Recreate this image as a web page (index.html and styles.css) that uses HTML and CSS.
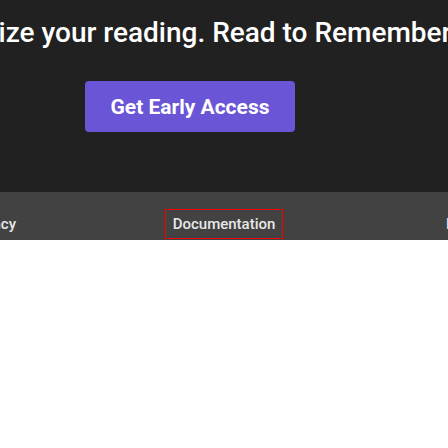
FILE: index.html
```html
<!DOCTYPE html>
<html>
<head>
<meta charset="utf-8">
<link rel="stylesheet" href="styles.css">
</head>
<body>
<section class="hero">
  <div class="hero-inner">
    <div class="headline-wrap">
      <h1 class="headline">Optimize your reading. Read to Remember.</h1>
    </div>
    <a class="cta" href="#">Get Early Access</a>
  </div>
</section>
<nav class="tabs">
  <div class="tabs-side tabs-left">
    <a class="tab" href="#">Privacy</a>
  </div>
  <a class="tab tab-active" href="#">Documentation</a>
  <div class="tabs-side tabs-right">
    <a class="tab" href="#">FAQ</a>
  </div>
</nav>
<main class="content"></main>
</body>
</html>
```
FILE: styles.css
```css
html, body {
  margin: 0;
  padding: 0;
  background: #ffffff;
  font-family: Roboto, "Noto Sans", sans-serif;
  overflow: hidden;
}
.hero {
  background: #212121;
  height: 192px;
  box-sizing: border-box;
  padding-top: 15px;
}
.hero-inner {
  width: 380px;
  display: flex;
  flex-direction: column;
  align-items: center;
}
.headline-wrap {
  width: 100%;
  display: flex;
  justify-content: center;
}
.headline {
  margin: 0;
  flex: none;
  white-space: nowrap;
  color: #ffffff;
  font-size: 28px;
  line-height: 36px;
  font-weight: 500;
}
.cta {
  margin-top: 30px;
  width: 210px;
  height: 51px;
  box-sizing: border-box;
  display: flex;
  align-items: center;
  justify-content: center;
  background: #6a55d6;
  color: #ffffff;
  border-radius: 4px;
  text-decoration: none;
  font-size: 21px;
  font-weight: 700;
}
.tabs {
  background: #424242;
  height: 48px;
  display: grid;
  grid-template-columns: minmax(0, 1fr) auto minmax(0, 1fr);
  align-items: start;
  padding-top: 17px;
  box-sizing: border-box;
  overflow: hidden;
}
.tabs-side {
  display: flex;
  min-width: 0;
}
.tabs-left {
  justify-content: flex-end;
  padding-right: 141px;
}
.tabs-right {
  justify-content: flex-start;
  padding-left: 155px;
}
.tab {
  flex: none;
  color: #e8e8e8;
  text-decoration: none;
  font-size: 15px;
  font-weight: 500;
  height: 30px;
  box-sizing: border-box;
  padding: 0 8px;
  display: flex;
  align-items: center;
  white-space: nowrap;
}
.tab-active {
  width: 118px;
  padding: 0;
  justify-content: center;
  box-shadow: inset 0 0 0 1px #ff0000;
}
.content {
  background: #ffffff;
  height: 208px;
}
```
